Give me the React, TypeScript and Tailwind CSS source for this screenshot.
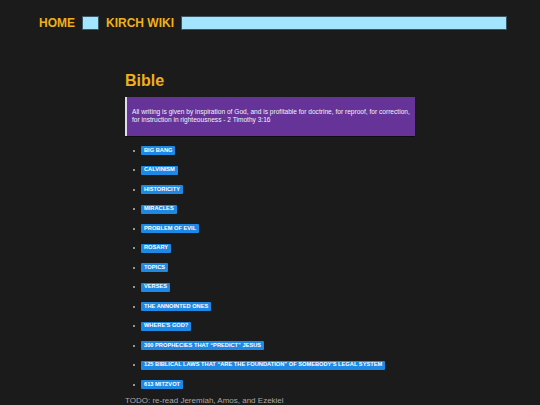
import React from "react";

const items = [
  "BIG BANG",
  "CALVINISM",
  "HISTORICITY",
  "MIRACLES",
  "PROBLEM OF EVIL",
  "ROSARY",
  "TOPICS",
  "VERSES",
  "THE ANNOINTED ONES",
  "WHERE'S GOD?",
  "300 PROPHECIES THAT \u201CPREDICT\u201D JESUS",
  "125 BIBLICAL LAWS THAT \u201CARE THE FOUNDATION\u201D OF SOMEBODY'S LEGAL SYSTEM",
  "613 MITZVOT",
];

export default function App() {
  return (
    <div
      className="w-[540px] h-[405px] overflow-hidden bg-[#1b1b1b]"
      style={{ fontFamily: '"Liberation Sans", Arial, sans-serif' }}
    >
      <div className="flex items-center gap-[7px] pl-[39px] pt-[16px] h-[30px]">
        <span className="text-[12px] leading-[13px] font-bold text-[#f0b01c]">HOME</span>
        <span className="w-[17px] h-[13.5px] bg-[#a3e4ff] border border-[#3b5563]" />
        <span className="text-[12px] leading-[13px] font-bold text-[#f0b01c]">KIRCH WIKI</span>
        <span className="w-[326px] h-[13.5px] bg-[#a3e4ff] border border-[#3b5563]" />
      </div>
      <div className="ml-[125px] w-[290px]">
        <h1 className="mt-[43px] text-[16px] leading-[16px] font-bold text-[#f0b01c]">Bible</h1>
        <div className="mt-[8px] h-[39px] bg-[#663399] border-l-2 border-[#e4daf0] pl-[5px] pt-[11px] shadow-[0_1px_0_#0e0e0e] text-[6.6px] leading-[8px] text-[#f2f2f2] whitespace-nowrap">
          All writing is given by inspiration of God, and is profitable for doctrine, for reproof, for correction,
          <br />
          for instruction in righteousness - 2 Timothy 3:16
        </div>
        <ul className="mt-[10px] flex flex-col gap-[10.5px]">
          {items.map((t) => (
            <li key={t} className="flex items-center h-[9px]">
              <span className="ml-[8px] w-[2px] h-[2px] rounded-full bg-[#bdbdbd]" />
              <span className="ml-[6px] h-[9px] px-[3px] flex items-center bg-[#1e88e5] text-white font-bold text-[5.7px] leading-none whitespace-nowrap rounded-[1px]">
                {t}
              </span>
            </li>
          ))}
        </ul>
        <p className="mt-[8px] text-[8px] leading-[8px] text-[#a8a8a8]">
          TODO: re-read Jeremiah, Amos, and Ezekiel
        </p>
      </div>
    </div>
  );
}
